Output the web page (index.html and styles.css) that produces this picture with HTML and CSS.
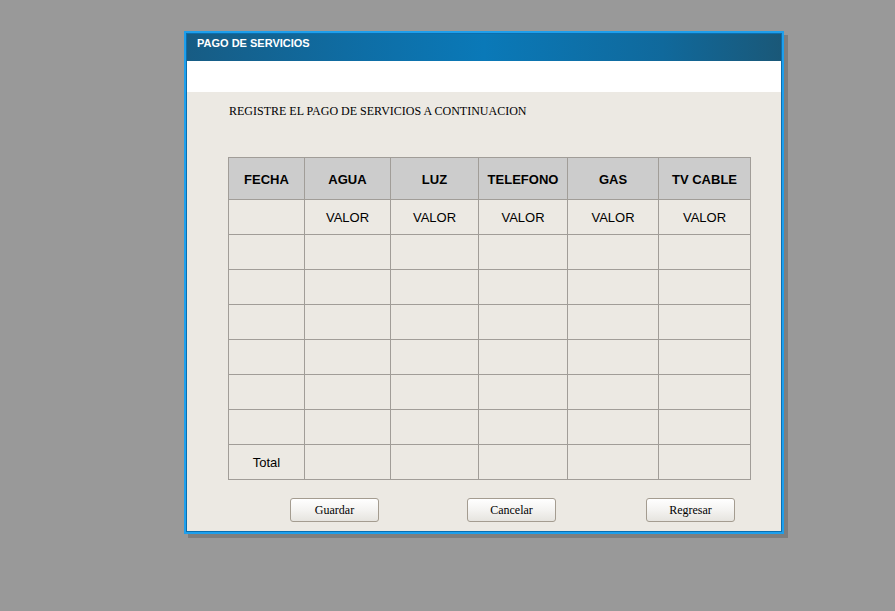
FILE: index.html
```html
<!DOCTYPE html>
<html lang="es">
<head>
<meta charset="utf-8">
<title>Pago de servicios</title>
<link rel="stylesheet" href="styles.css">
</head>
<body>
<div class="window">
  <div class="titlebar">PAGO DE SERVICIOS</div>
  <div class="band"></div>
  <div class="content">
    <p class="intro">REGISTRE EL PAGO DE SERVICIOS A CONTINUACION</p>
    <table class="grid">
      <colgroup>
        <col class="c1"><col class="c2"><col class="c3"><col class="c4"><col class="c5"><col class="c6">
      </colgroup>
      <thead>
        <tr><th>FECHA</th><th>AGUA</th><th>LUZ</th><th>TELEFONO</th><th>GAS</th><th>TV CABLE</th></tr>
      </thead>
      <tbody>
        <tr><td></td><td>VALOR</td><td>VALOR</td><td>VALOR</td><td>VALOR</td><td>VALOR</td></tr>
        <tr><td></td><td></td><td></td><td></td><td></td><td></td></tr>
        <tr><td></td><td></td><td></td><td></td><td></td><td></td></tr>
        <tr><td></td><td></td><td></td><td></td><td></td><td></td></tr>
        <tr><td></td><td></td><td></td><td></td><td></td><td></td></tr>
        <tr><td></td><td></td><td></td><td></td><td></td><td></td></tr>
        <tr><td></td><td></td><td></td><td></td><td></td><td></td></tr>
        <tr><td>Total</td><td></td><td></td><td></td><td></td><td></td></tr>
      </tbody>
    </table>
    <div class="actions">
      <button class="btn">Guardar</button>
      <button class="btn">Cancelar</button>
      <button class="btn">Regresar</button>
    </div>
  </div>
</div>
</body>
</html>
```

FILE: styles.css
```css
html, body {
  margin: 0;
  padding: 0;
  background: #999999;
}
body {
  padding: 31px 0 0 184px;
  height: 611px;
  box-sizing: border-box;
}
.window {
  width: 600px;
  height: 503px;
  box-sizing: border-box;
  border: 2px solid #1e9fec;
  outline: 1px solid #0b6eae;
  outline-offset: -3px;
  box-shadow: 4px 4px 0 #7e7e7e;
  background: #ece9e3;
  display: flex;
  flex-direction: column;
}
.titlebar {
  height: 28px;
  box-sizing: border-box;
  padding: 3px 0 0 10px;
  background: linear-gradient(to right, #175c84 0%, #0e6ea6 30%, #0a79b8 50%, #10699c 80%, #1a5878 100%);
  color: #ffffff;
  font: bold 11px "Liberation Sans", Arial, sans-serif;
  border: 1px solid #0b6eae;
  border-bottom: 0;
}
.band {
  height: 31px;
  background: #ffffff;
  margin: 0 1px;
}
.content {
  flex: 1;
  margin: 0 1px 1px;
  padding: 0 0 0 41px;
}
.intro {
  margin: 12px 0 0 1px;
  font: 12px "Liberation Serif", "Times New Roman", serif;
  color: #000;
}
.grid {
  margin-top: 38px;
  border-collapse: collapse;
  font: 13px "Liberation Sans", Arial, sans-serif;
  color: #000;
  table-layout: fixed;
  width: 522px;
}
.c1 { width: 76px; }
.c2 { width: 86px; }
.c3 { width: 88px; }
.c4 { width: 89px; }
.c5 { width: 91px; }
.c6 { width: 92px; }
.grid th, .grid td {
  border: 1px solid #a19d98;
  text-align: center;
  padding: 0;
}
.grid th {
  height: 40px;
  background: #cccccc;
  font-weight: bold;
  font-size: 13px;
  padding-top: 1px;
}
.grid td {
  height: 34px;
}
.actions {
  display: flex;
  gap: 88px;
  margin: 18px 0 0 62px;
}
.btn {
  width: 89px;
  height: 24px;
  border: 1px solid #a49c90;
  border-radius: 3px;
  background: linear-gradient(to bottom, #ffffff 0%, #f4f3f1 50%, #e6e4df 100%);
  font: 12px "Liberation Serif", "Times New Roman", serif;
  color: #000;
  padding: 0;
}
.btn:last-child {
  margin-left: 2px;
}
```
